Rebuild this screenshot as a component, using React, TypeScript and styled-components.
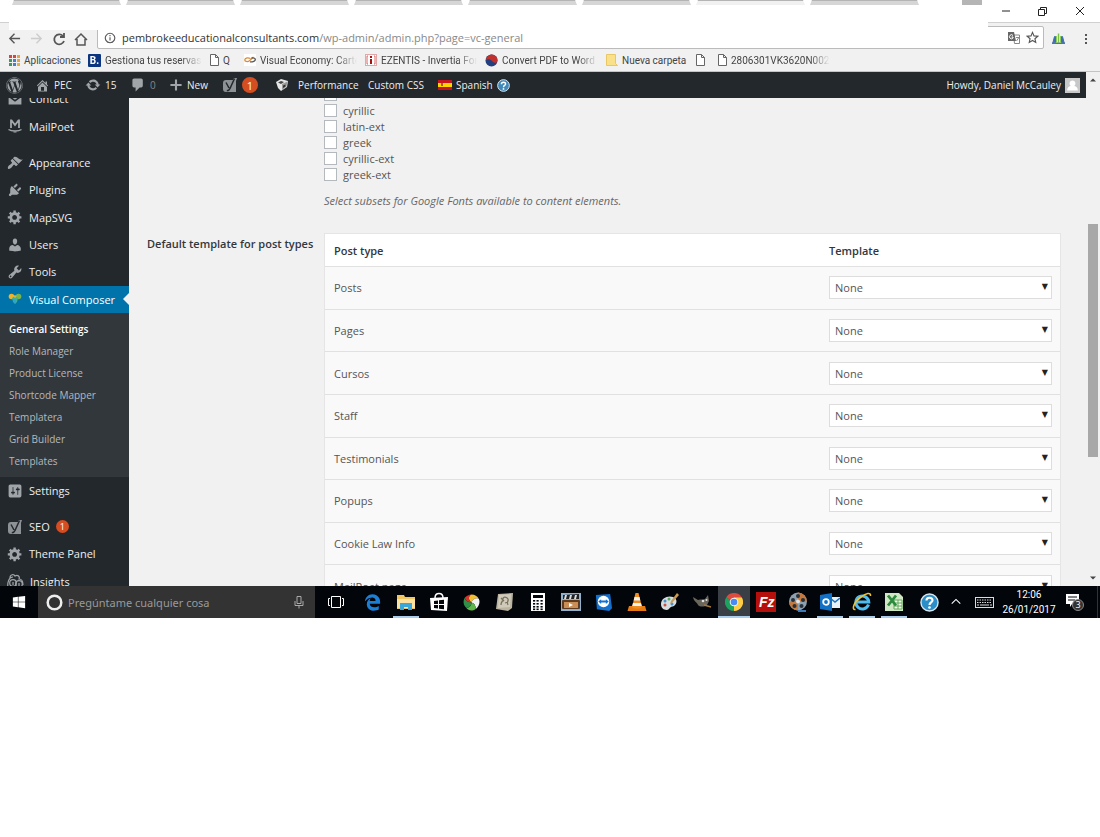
import React from "react";
import styled, { createGlobalStyle, css } from "styled-components";
import { FaWordpress, FaWindows } from "react-icons/fa";
import { FaEdgeLegacy, FaInternetExplorer } from "react-icons/fa6";

const GlobalStyle = createGlobalStyle`
  *, *::before, *::after { box-sizing: border-box; }
  body {
    margin: 0;
    background: #fff;
    font-family: "Open Sans", "Noto Sans", sans-serif;
    font-size: 11px;
    color: #555;
  }
  button, input, select { font: inherit; color: inherit; margin: 0; }
  button { border: 0; padding: 0; background: none; }
  a { color: inherit; text-decoration: none; }
  ul { list-style: none; margin: 0; padding: 0; }
  svg { display: block; flex: none; }
`;

/* ---------- Browser window ---------- */

const Desktop = styled.main`
  display: flex;
  flex-direction: column;
`;

const BrowserHeader = styled.header`
  position: relative;
  background: #f1f1f1;
`;

const TitleBar = styled.div`
  display: flex;
  justify-content: space-between;
  height: 22px;
  padding-right: 2px;
  background: #fff;
`;

const TabStrip = styled.div`
  display: flex;
  gap: 5px;
  height: 5px;
  padding-left: 12px;
  overflow: hidden;
`;

const Tab = styled.button<{ $active?: boolean }>`
  width: 109px;
  height: 5px;
  background: ${(p) => (p.$active ? "#f1f1f1" : "#d6d6d6")};
  border-top: 1px solid #b4b4b4;
  clip-path: polygon(2px 0, 107px 0, 109px 100%, 0 100%);
`;

const NewTab = styled.button`
  width: 20px;
  height: 5px;
  margin-left: 38px;
  background: #b5b5b5;
`;

const WindowControls = styled.div`
  display: flex;
  align-items: center;
  color: #222;
`;

const WindowButton = styled.button`
  display: grid;
  place-items: center;
  width: 37px;
  height: 22px;
`;

const Cover = styled.div`
  position: absolute;
  z-index: 2;
  top: 5px;
  left: 9px;
  right: 112px;
  height: 25px;
  background: #fff;
`;

const Toolbar = styled.div`
  display: flex;
  align-items: flex-end;
  height: 27px;
  padding-left: 8px;
  border-top: 1px solid #d0d0d0;
  color: #555;
`;

const NavButton = styled.button<{ $off?: boolean }>`
  display: flex;
  align-items: center;
  flex: none;
  width: 22px;
  height: 21px;
  color: ${(p) => (p.$off ? "#ccc" : "#555")};
`;

const AddressBar = styled.div`
  display: flex;
  flex: 1;
  align-items: center;
  gap: 6px;
  height: 23px;
  padding: 0 4px 0 6px;
  margin-left: 1px;
  border: 1px solid #bbb;
  border-radius: 2px;
  background: #fff;
`;

const Url = styled.p`
  flex: 1;
  margin: 0;
  color: #888;
  b { color: #333; font-weight: 400; }
`;

const ToolButton = styled.button`
  display: grid;
  place-items: center;
  width: 28px;
  height: 21px;
`;

const BookmarkBar = styled.nav`
  display: flex;
  gap: 8px;
  align-items: center;
  height: 23px;
  padding: 0 8px;
  border-bottom: 1px solid #c4c4c4;
`;

const Bookmark = styled.a<{ $width: number; $fade?: boolean }>`
  display: flex;
  flex: none;
  align-items: center;
  gap: 4px;
  width: ${(p) => p.$width}px;
  font-family: Roboto, "Noto Sans", sans-serif;
  font-size: 10px;
  white-space: nowrap;
  color: #444;
  ${(p) => p.$fade && css`mask-image: linear-gradient(90deg, #000 82%, transparent);`}
`;

const BookingMark = styled.span`
  display: grid;
  place-items: center;
  width: 13px;
  height: 13px;
  border-radius: 1px;
  background: #0b3580;
  color: #fff;
  font-size: 10px;
  font-weight: 700;
`;

/* ---------- Page viewport ---------- */

const Viewport = styled.div`
  display: flex;
  height: 514px;
  background: #f1f1f1;
`;

const Site = styled.div`
  display: flex;
  flex: 1;
  flex-direction: column;
  min-width: 0;
  overflow: hidden;
`;

const AdminBar = styled.nav`
  display: flex;
  flex: none;
  align-items: center;
  height: 26px;
  padding: 0 6px;
  background: #23282d;
  font-size: 10px;
  z-index: 1;
`;

const BarItem = styled.a<{ $width?: number; $dim?: boolean }>`
  display: flex;
  flex: none;
  align-items: center;
  gap: 4px;
  width: ${(p) => (p.$width ? `${p.$width}px` : "auto")};
  white-space: nowrap;
  color: ${(p) => (p.$dim ? "#82878c" : "#eee")};
  svg { color: #a0a5aa; }
`;

const Spacer = styled.span`
  flex: 1;
`;

const Count = styled.span<{ $size: number }>`
  display: grid;
  place-items: center;
  width: ${(p) => p.$size}px;
  height: ${(p) => p.$size}px;
  border-radius: 50%;
  background: #d54e21;
  color: #fff;
  font-size: ${(p) => (p.$size > 14 ? 11 : 9)}px;
`;

const Body = styled.div`
  display: flex;
  flex: 1;
  align-items: flex-start;
  min-height: 0;
  overflow: hidden;
`;

const Sidebar = styled.nav`
  flex: none;
  width: 129px;
  margin-top: -13px;
  background: #23282d;
  color: #eee;
`;

const MenuGroup = styled.ul<{ $height: number }>`
  display: grid;
  grid-auto-rows: 1fr;
  height: ${(p) => p.$height}px;
`;

const MenuGap = styled.div`
  height: 9px;
`;

const MenuLink = styled.a<{ $current?: boolean }>`
  position: relative;
  display: flex;
  align-items: center;
  gap: 6px;
  height: 100%;
  padding-left: 7px;
  white-space: nowrap;
  svg { color: #a0a5aa; }
  ${(p) =>
    p.$current &&
    css`
      background: #0073aa;
      color: #fff;
      &::after {
        content: "";
        position: absolute;
        right: 0;
        border: 6px solid transparent;
        border-right-color: #f1f1f1;
        border-left: 0;
      }
    `}
`;

const SubMenu = styled.ul`
  padding: 5px 0;
  background: #32373c;
`;

const SubLink = styled.a<{ $current?: boolean }>`
  display: block;
  padding-left: 9px;
  font-size: 10px;
  line-height: 22px;
  font-weight: ${(p) => (p.$current ? 600 : 400)};
  color: ${(p) => (p.$current ? "#fff" : "#b4b9be")};
`;

const Settings = styled.form`
  display: grid;
  flex: 1;
  grid-template-columns: 177px 1fr;
  min-width: 0;
  margin-top: -12px;
  padding: 0 25px 0 18px;
`;

const FieldName = styled.h2`
  margin: 0;
  padding-top: 3px;
  font-size: 11px;
  line-height: 16px;
  font-weight: 600;
  color: #32373c;
  white-space: nowrap;
`;

const Subsets = styled.div`
  grid-column: 2;
  padding-bottom: 24px;
`;

const CheckRow = styled.label`
  display: flex;
  align-items: center;
  gap: 6px;
  height: 16px;
`;

const Checkbox = styled.input`
  appearance: none;
  width: 13px;
  height: 13px;
  border: 1px solid #b4b9be;
  background: #fff;
`;

const Hint = styled.p`
  margin: 11px 0 0;
  line-height: 16px;
  font-style: italic;
  color: #666;
`;

const TypeTable = styled.table`
  width: 100%;
  height: 375px;
  border: 1px solid #e5e5e5;
  border-spacing: 0;
  background: #f9f9f9;
  th {
    height: 32px;
    padding: 0 9px;
    background: #fff;
    text-align: left;
    font-weight: 600;
    color: #32373c;
  }
  td {
    padding: 0 9px;
    border-top: 1px solid #e1e1e1;
  }
  th:last-child, td:last-child {
    width: 240px;
    padding: 0 8px 0 9px;
  }
`;

const SelectBox = styled.span`
  position: relative;
  display: block;
  &::after {
    content: "▼";
    position: absolute;
    top: 5px;
    right: 4px;
    font: 8px/12px "DejaVu Sans", sans-serif;
    color: #222;
    pointer-events: none;
  }
`;

const Select = styled.select`
  appearance: none;
  display: block;
  width: 100%;
  height: 23px;
  padding: 0 5px;
  border: 1px solid #ddd;
  border-radius: 0;
  background: #fff;
`;

const Scrollbar = styled.div`
  display: flex;
  flex: none;
  flex-direction: column;
  align-items: center;
  width: 14px;
  padding: 5px 0;
  background: #f1f1f1;
`;

const ScrollThumb = styled.div`
  width: 10px;
  height: 233px;
  margin: 141px 0 auto;
  background: #a8a8a8;
`;

/* ---------- Taskbar ---------- */

const Taskbar = styled.footer`
  display: flex;
  height: 32px;
  background: #02050a;
  color: #fff;
`;

const TaskButton = styled.button<{ $width?: number; $open?: boolean; $front?: boolean }>`
  display: grid;
  place-items: center;
  width: ${(p) => (p.$width ? `${p.$width}px` : "100%")};
  height: 32px;
  color: #fff;
  ${(p) =>
    p.$open &&
    css`
      background: linear-gradient(#a9cdea, #a9cdea) bottom / ${p.$front ? "100%" : "26px"} 2px no-repeat
        ${p.$front ? "#3a3f46" : "transparent"};
    `}
`;

const SearchBox = styled.label`
  display: flex;
  align-items: center;
  gap: 5px;
  width: 277px;
  padding: 0 9px 0 8px;
  background: #333;
  color: #aaa;
`;

const SearchInput = styled.input`
  flex: 1;
  min-width: 0;
  border: 0;
  padding: 0;
  background: none;
  font-family: "Noto Sans", sans-serif;
  font-size: 11px;
  &::placeholder { color: #9a9a9a; opacity: 1; }
`;

const Apps = styled.div`
  display: grid;
  grid-template-columns: repeat(10, 33px) repeat(7, 32px);
`;

const Tray = styled.div`
  display: flex;
  margin-left: auto;
  padding-right: 2px;
`;

const Clock = styled.time`
  width: 58px;
  padding-top: 1px;
  font-family: Roboto, "Noto Sans", sans-serif;
  font-size: 10px;
  line-height: 15px;
  text-align: center;
`;

const Alerts = styled(TaskButton)`
  padding-right: 6px;
  border-right: 1px solid #333;
`;

/* ---------- Icons ---------- */

const DASH = {
  home: "M16 8.5l1.53 1.53-1.06 1.06L10 4.6l-6.47 6.49-1.06-1.06L10 2.5l4 4v-2h2v4zm-6-2.46l6 5.99V18H4v-5.97zM12 17v-5H8v5h4z",
  update:
    "M10.2 3.28c3.53 0 6.43 2.61 6.92 6h2.08l-3.5 4-3.5-4h2.32c-.45-1.97-2.21-3.45-4.32-3.45-1.45 0-2.73.71-3.54 1.78L4.95 5.66C6.23 4.2 8.11 3.28 10.2 3.28zm-.4 13.44c-3.52 0-6.43-2.61-6.92-6H.8l3.5-4c1.17 1.33 2.33 2.67 3.5 4H5.48c.45 1.97 2.21 3.45 4.32 3.45 1.45 0 2.73-.71 3.54-1.78l1.71 1.95c-1.28 1.46-3.15 2.38-5.25 2.38z",
  comment: "M5 2h9c1.1 0 2 .9 2 2v7c0 1.1-.9 2-2 2h-2l-5 5v-5H5c-1.1 0-2-.9-2-2V4c0-1.1.9-2 2-2z",
  plus: "M18 8.5v3h-6.5V18h-3v-6.500H2v-3h6.500V2h3v6.500z",
  mail: "M2 4h16v1l-8 6-8-6zM2 7.500l8 6 8-6V17H2z",
  brush:
    "M14.48 11.06L7.41 3.99l1.5-1.5c.5-.56 2.3-.47 3.51.32 1.21.8 1.43 1.28 2.91 2.1 1.18.64 2.45 1.26 4.45.85zm-.71.71L6.7 4.7 4.93 6.47c-.39.39-.39 1.02 0 1.41l1.06 1.06c.39.39.39 1.03 0 1.42-.6.6-1.43 1.11-2.21 1.69-.35.26-.7.53-1.01.84C1.43 14.23.4 16.08 1.4 17.07c.99 1 2.84-.03 4.18-1.36.31-.31.58-.66.85-1.02.57-.78 1.08-1.61 1.69-2.21.39-.39 1.02-.39 1.41 0l1.06 1.06c.39.39 1.02.39 1.41 0z",
  plug: "M13.11 4.36L9.87 7.6 8 5.73l3.24-3.24c.35-.34 1.05-.2 1.56.32.52.51.66 1.21.31 1.55zm-8 1.77l.91-1.12 9.01 9.01-1.19.84c-.71.71-2.63 1.16-3.82 1.16H6.14L4.9 17.26c-.59.59-1.54.59-2.12 0-.59-.58-.59-1.53 0-2.12l1.24-1.24v-3.88c0-1.13.4-3.19 1.09-3.89zm7.26 3.97l3.24-3.24c.34-.35 1.04-.21 1.55.31.52.51.66 1.21.31 1.55l-3.24 3.25z",
  gear: "M18 12h-2.18c-.17.7-.44 1.35-.81 1.93l1.54 1.54-2.1 2.1-1.54-1.54c-.58.36-1.23.63-1.91.79V19H8v-2.18c-.68-.16-1.33-.43-1.91-.79l-1.54 1.54-2.12-2.12 1.54-1.54c-.36-.58-.63-1.23-.79-1.91H1V9.03h2.17c.16-.7.44-1.35.8-1.94L2.43 5.55l2.1-2.1 1.54 1.54c.58-.37 1.24-.64 1.93-.81V2h3v2.18c.68.16 1.33.43 1.91.79l1.54-1.54 2.12 2.12-1.54 1.54c.36.59.64 1.24.8 1.94H18V12zm-8.5 1.5c1.66 0 3-1.34 3-3s-1.34-3-3-3-3 1.34-3 3 1.34 3 3 3z",
  user: "M10 9.25c-2.27 0-2.73-3.44-2.73-3.44C7 4.02 7.82 2 9.97 2c2.16 0 2.98 2.02 2.71 3.81 0 0-.41 3.44-2.68 3.44zm0 2.57L12.72 10c2.39 0 4.52 2.33 4.52 4.53v2.49s-3.65 1.13-7.24 1.13c-3.65 0-7.24-1.13-7.24-1.13v-2.49c0-2.25 1.94-4.48 4.47-4.48z",
  wrench:
    "M16.68 9.77c-1.34 1.34-3.3 1.67-4.95.99l-5.41 6.52c-.99.99-2.59.99-3.58 0s-.99-2.59 0-3.57l6.52-5.42c-.68-1.65-.35-3.61.99-4.95 1.28-1.28 3.12-1.62 4.72-1.06l-2.89 2.89 2.82 2.82 2.86-2.87c.53 1.58.18 3.39-1.08 4.65zM3.81 16.21c.4.39 1.04.39 1.43 0 .4-.4.4-1.04 0-1.43-.39-.4-1.03-.4-1.43 0-.39.39-.39 1.03 0 1.43z",
  sliders:
    "M18 16V4c0-1.1-.9-2-2-2H4c-1.1 0-2 .9-2 2v12c0 1.1.9 2 2 2h12c1.100 0 2-.9 2-2zM8 11h1c.55 0 1 .45 1 1s-.45 1-1 1H8v1.500c0 .28-.22.5-.5.5s-.5-.22-.5-.5V13H6c-.55 0-1-.45-1-1s.45-1 1-1h1V5.500c0-.28.22-.5.5-.5s.5.22.5.5V11zm5-2h-1c-.55 0-1-.45-1-1s.45-1 1-1h1V5.500c0-.28.22-.5.5-.5s.5.22.5.5V7h1c.55 0 1 .45 1 1s-.45 1-1 1h-1v5.500c0 .28-.22.5-.5.5s-.5-.22-.5-.5V9z",
};

const Dash = ({ name, size = 16 }: { name: keyof typeof DASH; size?: number }) => (
  <svg width={size} height={size} viewBox="0 0 20 20" fill="currentColor" fillRule="evenodd">
    <path d={DASH[name]} />
  </svg>
);

const Line = ({ d, size = 14, w = 1.5 }: { d: string; size?: number; w?: number }) => (
  <svg width={size} height={size} viewBox="0 0 14 14" fill="none" stroke="currentColor" strokeWidth={w}>
    <path d={d} />
  </svg>
);

const YoastIcon = () => (
  <svg width="16" height="16" viewBox="0 0 16 16">
    <path d="M4 3h7l1-2h3L14 4v11H4a3 3 0 0 1-3-3V6a3 3 0 0 1 3-3z" fill="#8d9297" />
    <path d="M4 5.500l3 5.500M12.500 1.500L8 11.500C7.400 13 6.600 13.800 4.800 13.800" fill="none" stroke="#23282d" strokeWidth="1.500" />
  </svg>
);

const PageIcon = () => (
  <svg width="9" height="12" viewBox="0 0 9 12" fill="#fff" stroke="#666">
    <path d="M.5 .5h5l3 3v8h-8zM5.500 .5v3h3" />
  </svg>
);

const AppsIcon = () => (
  <svg width="12" height="12" viewBox="0 0 12 12">
    {["#d9453b", "#d9453b", "#e8a33a", "#3c9a5f", "#4a7fd0", "#e8a33a", "#3c9a5f", "#4a7fd0", "#e0b23a"].map((c, i) => (
      <rect key={i} x={(i % 3) * 4 + 1} y={Math.floor(i / 3) * 4 + 1} width="3" height="3" fill={c} />
    ))}
  </svg>
);

const EconomyIcon = () => (
  <svg width="12" height="12" viewBox="0 0 12 12" fill="none" strokeWidth="1.300">
    <rect width="12" height="12" fill="#fff" />
    <path d="M6.500 4.500C3 3 .8 4.500.8 6s2.700 2.200 4.700.8L9.500 3" stroke="#d98a3c" />
    <path d="M7.500 4c2.500-.5 4.200.5 3.700 2S8 8.300 6 7.800" stroke="#555" />
  </svg>
);

const InvertiaIcon = () => (
  <svg width="12" height="12" viewBox="0 0 12 12">
    <rect x=".5" y=".5" width="11" height="11" fill="#fff" stroke="#e0a8a8" />
    <path d="M3 2H2v8h1M9 2h1v8H9" fill="none" stroke="#d66" />
    <path d="M5 2h2v2H5zM5 5h2v5H5z" fill="#a11" />
  </svg>
);

const BallIcon = () => (
  <svg width="13" height="13" viewBox="0 0 13 13">
    <circle cx="6.500" cy="6.500" r="6" fill="#23407e" />
    <path d="M7 .5c4 .5 6 3.500 5.500 6.500C11.500 10 9 9 7 7 5 5 3 5 1 6 1 3 4 .5 7 .5z" fill="#c0302c" />
  </svg>
);

const FolderNote = () => (
  <svg width="12" height="12" viewBox="0 0 12 12">
    <path d="M.5.5h9v9l2 2H.5z" fill="#fbe08a" stroke="#e8c766" />
  </svg>
);

const TranslateIcon = () => (
  <svg width="12" height="12" viewBox="0 0 12 12">
    <path d="M5.500 3h6v8.500h-5z" fill="#fff" stroke="#888" />
    <path d="M0 0h6l2 9H0z" fill="#666" />
    <path d="M5 3.500A2 2 0 1 0 5 6V5H3.500" fill="none" stroke="#fff" />
    <path d="M8 5.500h3M9.500 5v1M8.500 9l2-3" stroke="#888" fill="none" />
  </svg>
);

const ExtensionIcon = () => (
  <svg width="13" height="12" viewBox="0 0 13 12">
    <path d="M2.500 3.500h1v6L.8 10zM9.500 3.500h1l1.700 6.500-2.700-.5z" fill="#3f6fae" stroke="#3f6fae" />
    <path d="M5.800.5h1.400v9H5.800z" fill="#7ac043" />
    <path d="M0 9.500h13v1.500H0z" fill="#4c74a8" />
    <path d="M4 3h1v7H4zM8 3h1v7H8z" fill="#8fca5f" />
  </svg>
);

const CubeIcon = () => (
  <svg width="14" height="14" viewBox="0 0 14 14">
    <path d="M1 4l5-3 7 2-1 6-6 4-3-3-1-3z" fill="#e6e6e6" />
    <path d="M7 6l5.500-2.500-1 5L7 12z" fill="#9a9a9a" />
    <path d="M3 4.500L6 3l3 1-3 2z" fill="#444" />
    <path d="M8 7.500l2.500-1v2L8 10z" fill="#333" />
  </svg>
);

const SpainFlag = () => (
  <svg width="14" height="10" viewBox="0 0 14 10">
    <rect width="14" height="10" fill="#c8141c" />
    <rect y="3" width="14" height="4" fill="#ffd500" />
    <rect x="3" y="3" width="2" height="3" fill="#b5562b" />
  </svg>
);

const HelpBall = ({ size, fill }: { size: number; fill: string }) => (
  <svg width={size} height={size} viewBox="0 0 20 20">
    <circle cx="10" cy="10" r="9" fill={fill} stroke="#d8e8f2" strokeWidth="1.500" />
    <path d="M6.800 8c0-4 6.400-4 6.400-.4 0 2.200-3.200 2.400-3.200 4.900" fill="none" stroke="#fff" strokeWidth="2.200" />
    <circle cx="10" cy="15.300" r="1.400" fill="#fff" />
  </svg>
);

const Avatar = () => (
  <svg width="15" height="15" viewBox="0 0 15 15">
    <rect width="15" height="15" fill="#c8c8c8" />
    <path d="M7.500 2.500a3 3 0 0 1 1.800 5.400c2.500.6 3.500 2 3.500 4.600H2.200c0-2.600 1-4 3.500-4.600A3 3 0 0 1 7.500 2.500z" fill="#fff" />
  </svg>
);

const MailPoetIcon = () => (
  <svg width="16" height="16" viewBox="0 0 16 16" fill="none" stroke="currentColor">
    <path d="M4 10V2.500h.5L8 7l3.500-4.500h.5V10" strokeWidth="1.800" />
    <path d="M1.500 11.500c3 2 10 2 13 0" strokeWidth="1.500" />
    <path d="M6.500 14h3" />
  </svg>
);

const ComposerIcon = () => (
  <svg width="16" height="16" viewBox="0 0 16 16">
    <circle cx="4.500" cy="5.500" r="2.800" fill="#f0b429" />
    <circle cx="11.500" cy="5.500" r="2.800" fill="#7cb342" />
    <path d="M5 7l3-2 3 2-1 4-2 2-2-2z" fill="#3fae9a" />
    <path d="M5.500 8l2.500 5 1-3.500z" fill="#2ba5c9" />
    <circle cx="8" cy="5.500" r="1.300" fill="#d9b33b" />
  </svg>
);

const InsightsIcon = () => (
  <svg width="17" height="17" viewBox="0 0 17 17" fill="none" stroke="currentColor" strokeWidth="1.200">
    <circle cx="6" cy="10" r="3.300" />
    <circle cx="12" cy="11" r="3.300" />
    <path d="M1 16C0 9 2 4 6 4M3 5c0-4 4-4 5-2 3-2 5 1 4 3 3 0 4 3 4 6M6 9v3M12 10v3" />
  </svg>
);

const ScrollArrow = ({ down }: { down?: boolean }) => (
  <svg width="6" height="6" viewBox="0 0 6 6">
    <path d={down ? "M0 1.500h6L3 4.500z" : "M0 4.500h6L3 1.500z"} fill="#444" />
  </svg>
);

/* Taskbar artwork shares one 20px canvas. */
const Art = ({ children, size = 20 }: { children: React.ReactNode; size?: number }) => (
  <svg width={size} height={size} viewBox="0 0 20 20">
    {children}
  </svg>
);

const apps: { name: string; open?: boolean; front?: boolean; icon: React.ReactNode }[] = [
  { name: "Edge", icon: <FaEdgeLegacy size={17} color="#1b7fd6" /> },
  {
    name: "Explorador",
    open: true,
    icon: (
      <Art>
        <path d="M1 3h7l1 2h10v12H1z" fill="#f0c661" />
        <path d="M1 7h18v9H1z" fill="#fbe2a0" />
        <path d="M4 18v-7h12v7h-4v-3H8v3z" fill="#3ba7d9" />
      </Art>
    ),
  },
  {
    name: "Tienda",
    icon: (
      <Art>
        <path d="M6 6c0-6 8-6 8 0" fill="none" stroke="#fff" strokeWidth="1.500" />
        <path d="M1 6l18-1-1 14-16-1z" fill="#fff" />
        <path d="M5 9l4-.5V12H5zM10 8.300l5-.6V12h-5zM5 13h4v3.500L5 16zM10 13h5v4.300l-5-.6z" fill="#02050a" />
      </Art>
    ),
  },
  {
    name: "Fotos",
    icon: (
      <Art size={17}>
        <path d="M10 10C6 7 6 2 10 .5c4 0 7 2 8.500 5C15 4 11 6 10 10z" fill="#f2c02e" />
        <path d="M10 10c1-4 5-6 8.500-4.500C21 10 18 16 15 17.500 15 13 13 11 10 10z" fill="#f2f2f2" />
        <path d="M10 10c3 1 5 3 5 7.500-4 3-9 2-11-1C7 16 10 14 10 10z" fill="#5fb548" />
        <path d="M10 10c0 4-3 6-6 6.500C0 13 0 8 2 4.500 3 8 6 10 10 10z" fill="#2f8f46" />
        <path d="M10 10C6 10 3 8 2 4.500 4 2 7 .5 10 .5 6 2 6 7 10 10z" fill="#d8342c" />
      </Art>
    ),
  },
  {
    name: "Mapas",
    icon: (
      <Art>
        <path d="M3 2l15-1-1 15-4 3-12-2z" fill="#b9b3a0" />
        <path d="M4 3l12-1-1 13-12 1z" fill="#cfcab9" />
        <path d="M6 13c0-4 2-3 2-6s4-2 5 0-2 3 0 6M6 6l3 3M10 11l3-1" fill="none" stroke="#77705e" strokeWidth="1.300" />
      </Art>
    ),
  },
  {
    name: "Calculadora",
    icon: (
      <Art>
        <path d="M3 1h14v18H3z" fill="#fff" />
        <path d="M5 3h10v3H5z" fill="#02050a" />
        {[8, 11, 14, 16.5].map((y) => [5, 8.5, 12.500].map((x) => <rect key={`${x}-${y}`} x={x} y={y} width="2.200" height="1.600" fill="#02050a" />))}
      </Art>
    ),
  },
  {
    name: "Movie Maker",
    icon: (
      <Art>
        <rect x="0" y="1" width="20" height="18" fill="#8fb3cf" />
        <path d="M2 3l16-1v5H2z" fill="#222" />
        <path d="M4 3h2L5 7H3zM9 3h2l-1 4H8zM14 3h2l-1 4h-2z" fill="#ddd" />
        <rect x="1" y="8" width="18" height="9" rx="1" fill="#5d3a20" />
        <rect x="3" y="10" width="14" height="6" fill="#c98d56" />
        <path d="M8 11l4 2-4 2z" fill="#fff" />
      </Art>
    ),
  },
  {
    name: "TeamViewer",
    icon: (
      <Art size={19}>
        <path d="M2 2l15-1 2 15-3 3-13-2z" fill="#1470cf" />
        <circle cx="10" cy="9" r="6" fill="#fff" />
        <path d="M4.500 9l3-2.500V8h5V6.500l3 2.500-3 2.500V10h-5v1.500z" fill="#1470cf" />
      </Art>
    ),
  },
  {
    name: "VLC",
    icon: (
      <Art>
        <path d="M2 14h16l1.500 5H.5z" fill="#e57a14" />
        <path d="M8.500 1h3L15 15c-2 2-8 2-10 0z" fill="#f18d1e" />
        <path d="M7.500 5h5l.8 3.500H6.700zM6 11h8l.8 3H5.200z" fill="#f2f2f2" />
      </Art>
    ),
  },
  {
    name: "Paint",
    icon: (
      <Art>
        <path d="M1 12C1 6 8 3 13 5s4 7 1 9c-2 1-3 0-5 3-2 2-8 1-8-5z" fill="#d6dde0" />
        <circle cx="5" cy="9" r="1.500" fill="#4a90c9" />
        <circle cx="9" cy="7" r="1.500" fill="#58a659" />
        <circle cx="5" cy="13" r="1.500" fill="#c9553f" />
        <circle cx="12" cy="12" r="1.500" fill="#4a90c9" />
        <path d="M17 1l2 2-7 8-2 1 1-3z" fill="#c99a52" />
      </Art>
    ),
  },
  {
    name: "GIMP",
    icon: (
      <Art>
        <path d="M1 5l5 3c3-1 5 0 7-1l3-4 1 6-2 4c-3 2-7 2-9 0-1-3-4-3-5-8z" fill="#6b665c" />
        <circle cx="11" cy="9" r="1.300" fill="#ddd" />
        <circle cx="14.500" cy="8" r="1" fill="#ddd" />
        <path d="M12 13l7 2" stroke="#a6793d" strokeWidth="1.500" />
      </Art>
    ),
  },
  {
    name: "Chrome",
    open: true,
    front: true,
    icon: (
      <Art size={18}>
        <path d="M10 10L1.300 5A10 10 0 0 1 18.700 5z" fill="#dd4b3e" />
        <path d="M10 10L1.300 5A10 10 0 0 0 10 20z" fill="#1da15f" />
        <path d="M10 10V20A10 10 0 0 0 18.700 5H10z" fill="#ffcd42" />
        <circle cx="10" cy="10" r="4.800" fill="#f4f4f4" />
        <circle cx="10" cy="10" r="3.700" fill="#4a8af4" />
      </Art>
    ),
  },
  {
    name: "FileZilla",
    icon: (
      <Art>
        <rect width="20" height="20" fill="#b5100c" />
        <text x="3" y="15" fill="#fff" fontSize="14" fontWeight="700" fontStyle="italic" fontFamily="Liberation Sans, sans-serif">
          Fz
        </text>
      </Art>
    ),
  },
  {
    name: "Película",
    icon: (
      <Art>
        <circle cx="10" cy="9.500" r="9" fill="#8fa0ae" />
        <path d="M10 .5a9 9 0 0 1 9 9h-9zM10 18.500a9 9 0 0 1-9-9h9z" fill="#c4793f" />
        {[[10, 4], [15, 8], [13.500, 14], [6.500, 14], [5, 8]].map(([x, y]) => (
          <circle key={`${x}-${y}`} cx={x} cy={y} r="2" fill="#26313c" />
        ))}
        <circle cx="10" cy="9.500" r="2" fill="#dfe6ea" />
        <path d="M10 19h8" stroke="#3d7ab8" strokeWidth="2" />
      </Art>
    ),
  },
  {
    name: "Outlook",
    open: true,
    icon: (
      <Art>
        <path d="M10 5h10v11H10z" fill="#e8f1f8" />
        <path d="M10 6l5 4 5-4" fill="none" stroke="#1a72c0" strokeWidth="1.500" />
        <path d="M0 3l12-2v18L0 17z" fill="#1271c4" />
        <circle cx="6" cy="10" r="2.800" fill="none" stroke="#fff" strokeWidth="1.800" />
      </Art>
    ),
  },
  {
    name: "Internet Explorer",
    open: true,
    icon: (
      <Art>
        <path d="M16.500 12.500A6.500 6.500 0 1 1 16.800 10H5" fill="none" stroke="#4fbdf0" strokeWidth="3" />
        <path d="M3.500 17.500C-1 18 2 10 9 5c5-4 10-5 9.500-1" fill="none" stroke="#f2c230" strokeWidth="1.600" />
      </Art>
    ),
  },
  {
    name: "Excel",
    open: true,
    icon: (
      <Art>
        <path d="M1 1h14l4 4v14H1z" fill="#cfe8c4" />
        <path d="M10 8h8v9h-8z" fill="#f5fbf2" stroke="#5ea854" />
        <path d="M10 11h8M10 14h8M14 8v9" stroke="#5ea854" />
        <path d="M4 3.500l8 10M12 3.500l-8 10" stroke="#2b8a3e" strokeWidth="2.800" />
      </Art>
    ),
  },
];

/* ---------- Data ---------- */

const subsets = ["cyrillic", "latin-ext", "greek", "cyrillic-ext", "greek-ext"];

const postTypes = ["Posts", "Pages", "Cursos", "Staff", "Testimonials", "Popups", "Cookie Law Info", "MailPoet page"];

const composerPages = [
  "General Settings",
  "Role Manager",
  "Product License",
  "Shortcode Mapper",
  "Templatera",
  "Grid Builder",
  "Templates",
];

type Entry = { label: string; icon: React.ReactNode; current?: boolean; count?: number };

const topMenu: Entry[] = [
  { label: "Contact", icon: <Dash name="mail" /> },
  { label: "MailPoet", icon: <MailPoetIcon /> },
];

const mainMenu: Entry[] = [
  { label: "Appearance", icon: <Dash name="brush" /> },
  { label: "Plugins", icon: <Dash name="plug" /> },
  { label: "MapSVG", icon: <Dash name="gear" /> },
  { label: "Users", icon: <Dash name="user" /> },
  { label: "Tools", icon: <Dash name="wrench" /> },
  { label: "Visual Composer", icon: <ComposerIcon />, current: true },
];

const settingsMenu: Entry[] = [{ label: "Settings", icon: <Dash name="sliders" /> }];

const extraMenu: Entry[] = [
  { label: "SEO", icon: <YoastIcon />, count: 1 },
  { label: "Theme Panel", icon: <Dash name="gear" /> },
  { label: "Insights", icon: <InsightsIcon /> },
];

const Menu = ({ items, height }: { items: Entry[]; height: number }) => (
  <MenuGroup $height={height}>
    {items.map((item) => (
      <li key={item.label}>
        <MenuLink href="#" $current={item.current}>
          {item.icon}
          {item.label}
          {item.count && <Count $size={13}>{item.count}</Count>}
        </MenuLink>
      </li>
    ))}
  </MenuGroup>
);

export default function App() {
  return (
    <Desktop>
      <GlobalStyle />
      <BrowserHeader>
        <TitleBar>
          <TabStrip>
            {Array.from({ length: 8 }, (_, i) => (
              <Tab key={i} type="button" aria-label={`Tab ${i + 1}`} $active={i === 6} />
            ))}
            <NewTab type="button" aria-label="New tab" />
          </TabStrip>
          <WindowControls>
            <WindowButton type="button" aria-label="Minimize">
              <Line d="M3 7h8" w={1} />
            </WindowButton>
            <WindowButton type="button" aria-label="Restore">
              <Line d="M2.500 5.500h6v6h-6zM4.500 5.500v-2h6v6h-2" w={1} />
            </WindowButton>
            <WindowButton type="button" aria-label="Close">
              <Line d="M3 3l8 8M11 3l-8 8" w={1} />
            </WindowButton>
          </WindowControls>
        </TitleBar>
        <Cover />
        <Toolbar>
          <NavButton type="button" aria-label="Back">
            <Line d="M13 7H2M7 2L2 7l5 5" size={13} />
          </NavButton>
          <NavButton type="button" aria-label="Forward" $off>
            <Line d="M1 7h11M7 2l5 5-5 5" size={13} />
          </NavButton>
          <NavButton type="button" aria-label="Reload">
            <Line d="M12 9A5 5 0 1 1 11 4M12 1v4H8" w={1.8} />
          </NavButton>
          <NavButton type="button" aria-label="Home">
            <Line d="M1 8L7 2l6 6M3 7v6h8V7" />
          </NavButton>
          <AddressBar>
            <Line d="M7 1.500a5.500 5.500 0 1 0 .1 0M7 6v4M7 3.500v1.500" size={12} w={1.3} />
            <Url>
              <b>pembrokeeducationalconsultants.com</b>/wp-admin/admin.php?page=vc-general
            </Url>
            <TranslateIcon />
            <Line d="M7 1.500l1.600 3.800 4.100.3-3.100 2.700.9 4L7 10.200l-3.500 2.100.9-4L1.300 5.600l4.100-.3z" size={13} w={1.2} />
          </AddressBar>
          <ToolButton type="button" aria-label="Extension">
            <ExtensionIcon />
          </ToolButton>
          <ToolButton type="button" aria-label="Menu">
            <svg width="4" height="12" viewBox="0 0 4 12" fill="#555">
              <path d="M1 1h2v2H1zM1 5h2v2H1zM1 9h2v2H1z" />
            </svg>
          </ToolButton>
        </Toolbar>
        <BookmarkBar>
          <Bookmark href="#" $width={72}><AppsIcon />Aplicaciones</Bookmark>
          <Bookmark href="#" $width={114} $fade><BookingMark>B.</BookingMark>Gestiona tus reservas</Bookmark>
          <Bookmark href="#" $width={26}><PageIcon />Q</Bookmark>
          <Bookmark href="#" $width={113} $fade><EconomyIcon />Visual Economy: Carte</Bookmark>
          <Bookmark href="#" $width={112} $fade><InvertiaIcon />EZENTIS - Invertia For</Bookmark>
          <Bookmark href="#" $width={113} $fade><BallIcon />Convert PDF to Word</Bookmark>
          <Bookmark href="#" $width={82}><FolderNote />Nueva carpeta</Bookmark>
          <Bookmark href="#" $width={14} aria-label="Page"><PageIcon /></Bookmark>
          <Bookmark href="#" $width={112} $fade><PageIcon />2806301VK3620N002</Bookmark>
        </BookmarkBar>
      </BrowserHeader>

      <Viewport>
        <Site>
          <AdminBar>
            <BarItem href="#" $width={29} aria-label="WordPress"><FaWordpress size={17} /></BarItem>
            <BarItem href="#" $width={50}><Dash name="home" size={15} />PEC</BarItem>
            <BarItem href="#" $width={45}><Dash name="update" />15</BarItem>
            <BarItem href="#" $width={39} $dim><Dash name="comment" />0</BarItem>
            <BarItem href="#" $width={53}><Dash name="plus" size={14} />New</BarItem>
            <BarItem href="#" $width={53}><YoastIcon /><Count $size={16}>1</Count></BarItem>
            <BarItem href="#" $width={23} aria-label="Cache"><CubeIcon /></BarItem>
            <BarItem href="#" $width={70}>Performance</BarItem>
            <BarItem href="#" $width={70}>Custom CSS</BarItem>
            <BarItem href="#" $width={59}><SpainFlag />Spanish</BarItem>
            <BarItem href="#" aria-label="Help"><HelpBall size={13} fill="#3f88b8" /></BarItem>
            <Spacer />
            <BarItem href="#">Howdy, Daniel McCauley<Avatar /></BarItem>
          </AdminBar>
          <Body>
            <Sidebar>
              <Menu items={topMenu} height={55} />
              <MenuGap />
              <Menu items={mainMenu} height={164} />
              <SubMenu>
                {composerPages.map((page, i) => (
                  <li key={page}>
                    <SubLink href="#" $current={i === 0}>{page}</SubLink>
                  </li>
                ))}
              </SubMenu>
              <Menu items={settingsMenu} height={27} />
              <MenuGap />
              <Menu items={extraMenu} height={82} />
            </Sidebar>
            <Settings>
              <Subsets>
                <CheckRow>
                  <Checkbox type="checkbox" aria-label="vietnamese" />
                </CheckRow>
                {subsets.map((name) => (
                  <CheckRow key={name}>
                    <Checkbox type="checkbox" />
                    {name}
                  </CheckRow>
                ))}
                <Hint>Select subsets for Google Fonts available to content elements.</Hint>
              </Subsets>
              <FieldName>Default template for post types</FieldName>
              <TypeTable>
                <thead>
                  <tr>
                    <th>Post type</th>
                    <th>Template</th>
                  </tr>
                </thead>
                <tbody>
                  {postTypes.map((type) => (
                    <tr key={type}>
                      <td>{type}</td>
                      <td>
                        <SelectBox>
                          <Select aria-label={`Template for ${type}`}>
                            <option>None</option>
                          </Select>
                        </SelectBox>
                      </td>
                    </tr>
                  ))}
                </tbody>
              </TypeTable>
            </Settings>
          </Body>
        </Site>
        <Scrollbar>
          <ScrollArrow />
          <ScrollThumb />
          <ScrollArrow down />
        </Scrollbar>
      </Viewport>

      <Taskbar>
        <TaskButton type="button" $width={38} aria-label="Inicio"><FaWindows size={14} /></TaskButton>
        <SearchBox>
          <svg width="17" height="17" viewBox="0 0 17 17" fill="none" stroke="#eee" strokeWidth="2.500">
            <circle cx="8.500" cy="8.500" r="6.800" />
          </svg>
          <SearchInput type="text" placeholder="Pregúntame cualquier cosa" aria-label="Pregúntame cualquier cosa" />
          <Line d="M5 1.500h4v7H5zM3 6v4.500h8V6M7 10.500v3" w={1} />
        </SearchBox>
        <TaskButton type="button" $width={41} aria-label="Vista de tareas">
          <svg width="16" height="12" viewBox="0 0 16 12" fill="none" stroke="#fff">
            <path d="M3.500.5h9v11h-9zM2 2.500H.5v7H2M14 2.500h1.500v7H14" />
          </svg>
        </TaskButton>
        <Apps>
          {apps.map((app) => (
            <TaskButton key={app.name} type="button" aria-label={app.name} $open={app.open} $front={app.front}>
              {app.icon}
            </TaskButton>
          ))}
        </Apps>
        <Tray>
          <TaskButton type="button" $width={28} aria-label="Ayuda"><HelpBall size={19} fill="#2a8fc9" /></TaskButton>
          <TaskButton type="button" $width={25} aria-label="Mostrar iconos ocultos"><Line d="M2 9l5-5 5 5" size={12} w={1.3} /></TaskButton>
          <TaskButton type="button" $width={32} aria-label="Teclado">
            <svg width="19" height="11" viewBox="0 0 19 11" fill="none" stroke="#ddd">
              <rect x=".5" y=".5" width="18" height="10" />
              <path d="M2 3h15M2 5.500h15" strokeDasharray="1.500 1" />
              <path d="M2 8h2M5 8h9M15 8h2" />
            </svg>
          </TaskButton>
          <Clock>12:06<br />26/01/2017</Clock>
          <Alerts type="button" $width={40} aria-label="Notificaciones">
            <svg width="20" height="20" viewBox="0 0 20 20">
              <path d="M1 2h13v10H7l-2 3v-3H1z" fill="#fff" />
              <path d="M3 5h9M3 8h7" stroke="#02050a" />
              <circle cx="13" cy="13" r="5.500" fill="#333" stroke="#888" />
              <text x="13" y="16" textAnchor="middle" fontSize="9" fill="#fff">3</text>
            </svg>
          </Alerts>
        </Tray>
      </Taskbar>
    </Desktop>
  );
}
